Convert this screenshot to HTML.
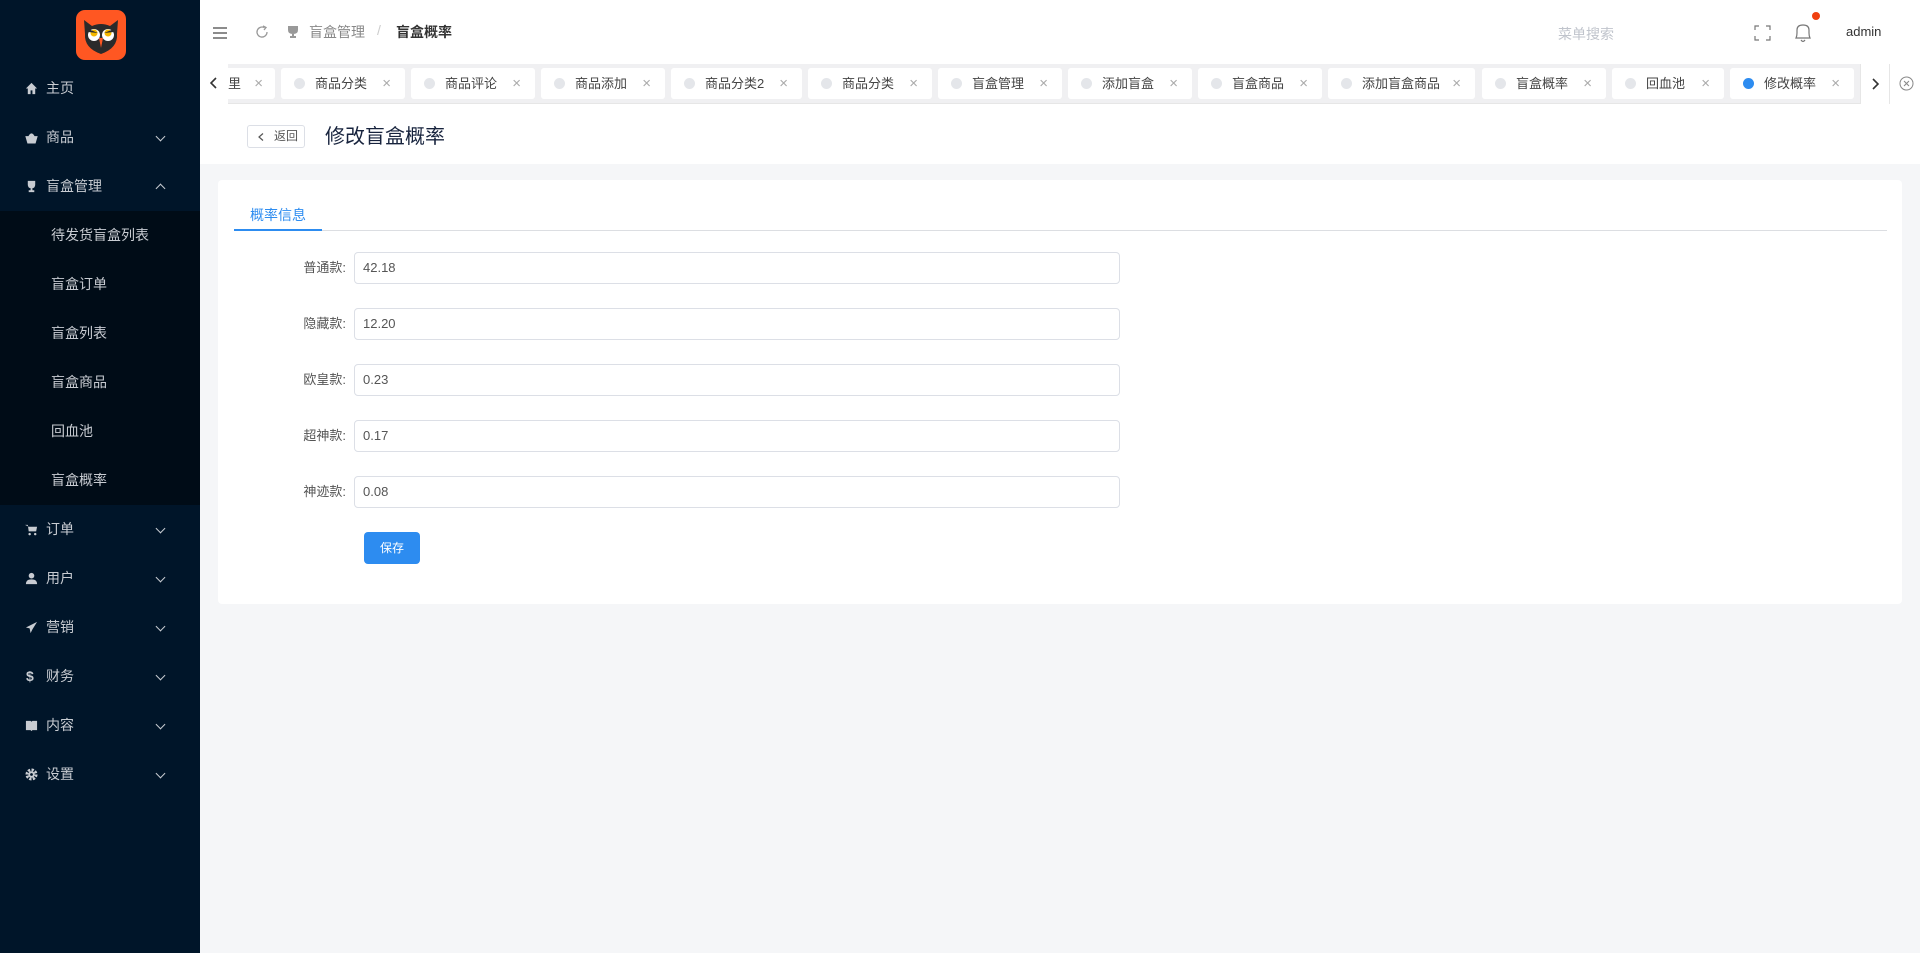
<!DOCTYPE html>
<html><head><meta charset="utf-8"><style>
*{box-sizing:border-box;margin:0;padding:0}
body{width:1920px;height:953px;overflow:hidden;background:#f5f6f8;font-family:"Liberation Sans","Noto Sans CJK SC",sans-serif;position:relative;font-size:14px;color:#333}
.side{position:absolute;left:0;top:0;width:200px;height:953px;background:#001529}
.logo{position:absolute;left:76px;top:10px;width:50px;height:50px;background:#ff5722;border-radius:9px;overflow:hidden}
.mi{position:absolute;left:0;width:200px;height:49px;color:#c8ccd2;font-size:14px;line-height:49px}
.mi .ic{position:absolute;left:25px;top:18px;width:13px;height:13px}
.mi .t{position:absolute;left:46px}
.mi .ar{position:absolute;left:157px;top:20px;width:7px;height:7px;border-right:1.5px solid #c8ccd2;border-bottom:1.5px solid #c8ccd2;transform:rotate(45deg)}
.mi .ar.up{top:23px;transform:rotate(-135deg)}
.sub{position:absolute;left:0;top:211px;width:200px;height:294px;background:#000c17}
.sub div{height:49px;line-height:49px;padding-left:51px;color:#c8ccd2;font-size:14px}
.hdr{position:absolute;left:200px;top:0;width:1720px;height:64px;background:#fff}
.tabs{position:absolute;left:200px;top:64px;width:1720px;height:40px;background:#f0f0f2;border-bottom:1px solid #e6e6e6}
.tab{position:absolute;top:4px;height:31px;background:#fff;border-radius:3px;font-size:13px;color:#444;line-height:31px}
.tab .d{position:absolute;left:13px;top:10px;width:11px;height:11px;border-radius:50%;background:#e4e6ea}
.tab .t{position:absolute;left:34px}
.tab .x{position:absolute;right:14px;color:#aaa;font-size:15px}
.ph{position:absolute;left:200px;top:104px;width:1720px;height:60px;background:#fff}
.card{position:absolute;left:218px;top:180px;width:1684px;height:424px;background:#fff;border-radius:4px}
.lbl{position:absolute;left:256px;width:90px;text-align:right;font-size:13px;color:#555;line-height:32px}
.inp{position:absolute;left:354px;width:766px;height:32px;border:1px solid #dcdfe6;border-radius:4px;font-size:13px;color:#555;line-height:30px;padding-left:8px}
</style></head><body>
<div class="side">
 <div class="logo"><svg width="50" height="50" viewBox="0 0 50 50"><path d="M8 10 L16 16 Q25 12 34 16 L42 10 L41 24 Q42 38 25 44 Q8 38 9 24Z" fill="#2b2b2b"/><circle cx="18" cy="25" r="6" fill="#fff"/><circle cx="32" cy="25" r="6" fill="#fff"/><circle cx="18" cy="23" r="3.5" fill="#f5b800"/><circle cx="32" cy="23" r="3.5" fill="#f5b800"/><path d="M12 19 L22 23 L12 22Z M38 19 L28 23 L38 22Z" fill="#2b2b2b"/><path d="M23 28 L27 28 L25 38Z" fill="#ff5722"/></svg></div>
 <div class="mi" style="top:64px"><svg class="ic" viewBox="0 0 14 14"><path d="M7 1 L1 7 H3 V13 H6 V9 H8 V13 H11 V7 H13Z" fill="#c8ccd2"/></svg><span class="t">主页</span></div>
 <div class="mi" style="top:113px"><svg class="ic" viewBox="0 0 14 14"><path d="M1 6 H13 L11 13 H3Z M4 6 Q7 0 10 6" fill="#c8ccd2" stroke="#c8ccd2"/></svg><span class="t">商品</span><i class="ar"></i></div>
 <div class="mi" style="top:162px"><svg class="ic" viewBox="0 0 14 14"><path d="M3 1 H11 V5 Q11 9 7 9 Q3 9 3 5Z M6 9 H8 V11 H10 V13 H4 V11 H6Z" fill="#c8ccd2"/></svg><span class="t">盲盒管理</span><i class="ar up"></i></div>
 <div class="sub"><div>待发货盲盒列表</div><div>盲盒订单</div><div>盲盒列表</div><div>盲盒商品</div><div>回血池</div><div>盲盒概率</div></div>
 <div class="mi" style="top:505px"><svg class="ic" viewBox="0 0 14 14"><path d="M0 2 H3 L4 9 H12 L13 4 H4" fill="#c8ccd2"/><circle cx="5" cy="12" r="1.3" fill="#c8ccd2"/><circle cx="11" cy="12" r="1.3" fill="#c8ccd2"/></svg><span class="t">订单</span><i class="ar"></i></div>
 <div class="mi" style="top:554px"><svg class="ic" viewBox="0 0 14 14"><circle cx="7" cy="4" r="3" fill="#c8ccd2"/><path d="M1 13 Q1 8 7 8 Q13 8 13 13Z" fill="#c8ccd2"/></svg><span class="t">用户</span><i class="ar"></i></div>
 <div class="mi" style="top:603px"><svg class="ic" viewBox="0 0 14 14"><path d="M13 1 L1 7 L5 8 L6 13 L8 9Z" fill="#c8ccd2"/></svg><span class="t">营销</span><i class="ar"></i></div>
 <div class="mi" style="top:652px"><span style="position:absolute;left:26px;font-weight:bold;font-size:14px">$</span><span class="t">财务</span><i class="ar"></i></div>
 <div class="mi" style="top:701px"><svg class="ic" viewBox="0 0 14 14"><path d="M1 2 H6 L7 3 L8 2 H13 V12 H8 L7 13 L6 12 H1Z" fill="#c8ccd2"/></svg><span class="t">内容</span><i class="ar"></i></div>
 <div class="mi" style="top:750px"><svg class="ic" viewBox="0 0 14 14"><circle cx="7" cy="7" r="5" fill="none" stroke="#c8ccd2" stroke-width="3" stroke-dasharray="2.5 1.4"/><circle cx="7" cy="7" r="3.5" fill="#c8ccd2"/><circle cx="7" cy="7" r="1.5" fill="#001529"/></svg><span class="t">设置</span><i class="ar"></i></div>
</div>
<div class="hdr">
 <svg style="position:absolute;left:13px;top:27px" width="14" height="12"><path d="M0 1H14M0 6H14M0 11H14" stroke="#666" stroke-width="1.6"/></svg>
 <svg style="position:absolute;left:55px;top:25px" width="14" height="14" viewBox="0 0 14 14"><path d="M12 7 A5 5 0 1 1 9.5 2.7" fill="none" stroke="#999" stroke-width="1.3"/><path d="M8 1 L11 2.5 L9 5" fill="none" stroke="#999" stroke-width="1.3"/></svg>
 <svg style="position:absolute;left:87px;top:26px" width="12" height="13" viewBox="0 0 12 13"><path d="M1 0 H11 V4 Q11 8 6 8 Q1 8 1 4Z M5 8 H7 V10 H9 V12 H3 V10 H5Z" fill="#999"/></svg>
 <span style="position:absolute;left:109px;top:22px;color:#888;font-size:14px">盲盒管理</span>
 <span style="position:absolute;left:177px;top:22px;color:#ccc;font-size:14px">/</span>
 <span style="position:absolute;left:196px;top:22px;color:#333;font-size:14px;font-weight:bold">盲盒概率</span>
 <span style="position:absolute;left:1358px;top:24px;color:#c0c4cc;font-size:14px">菜单搜索</span>
 <svg style="position:absolute;left:1554px;top:25px" width="17" height="16"><path d="M1 5V1H5M12 1H16V5M16 11V15H12M5 15H1V11" fill="none" stroke="#777" stroke-width="1.2"/></svg>
 <svg style="position:absolute;left:1594px;top:22px" width="18" height="22" viewBox="0 0 18 22"><path d="M2 16 Q3 14 3 11 V8 Q3 3 9 3 Q15 3 15 8 V11 Q15 14 16 16Z M7 18 Q9 21 11 18" fill="none" stroke="#777" stroke-width="1.2"/></svg>
 <span style="position:absolute;left:1612px;top:12px;width:8px;height:8px;border-radius:50%;background:#f0400f"></span>
 <span style="position:absolute;left:1646px;top:24px;color:#333;font-size:13px">admin</span>
</div>
<div class="tabs">
 <div style="position:absolute;left:0;top:0;width:28px;height:40px;background:#fff"><svg style="position:absolute;left:10px;top:13px" width="8" height="12"><path d="M6 1 L1 6 L6 11" fill="none" stroke="#333" stroke-width="1.6"/></svg></div>
 <div class="tab" style="left:28px;width:47px;border-radius:0 3px 3px 0"><span style="position:absolute;left:0">里</span><span class="x" style="right:12px">×</span></div>
 <div class="tab" style="left:81px;width:124px"><i class="d"></i><span class="t">商品分类</span><span class="x">×</span></div>
 <div class="tab" style="left:211px;width:124px"><i class="d"></i><span class="t">商品评论</span><span class="x">×</span></div>
 <div class="tab" style="left:341px;width:124px"><i class="d"></i><span class="t">商品添加</span><span class="x">×</span></div>
 <div class="tab" style="left:471px;width:131px"><i class="d"></i><span class="t">商品分类2</span><span class="x">×</span></div>
 <div class="tab" style="left:608px;width:124px"><i class="d"></i><span class="t">商品分类</span><span class="x">×</span></div>
 <div class="tab" style="left:738px;width:124px"><i class="d"></i><span class="t">盲盒管理</span><span class="x">×</span></div>
 <div class="tab" style="left:868px;width:124px"><i class="d"></i><span class="t">添加盲盒</span><span class="x">×</span></div>
 <div class="tab" style="left:998px;width:124px"><i class="d"></i><span class="t">盲盒商品</span><span class="x">×</span></div>
 <div class="tab" style="left:1128px;width:147px"><i class="d"></i><span class="t">添加盲盒商品</span><span class="x">×</span></div>
 <div class="tab" style="left:1282px;width:124px"><i class="d"></i><span class="t">盲盒概率</span><span class="x">×</span></div>
 <div class="tab" style="left:1412px;width:112px"><i class="d"></i><span class="t">回血池</span><span class="x">×</span></div>
 <div class="tab" style="left:1530px;width:124px"><i class="d" style="background:#2d8cf0"></i><span class="t">修改概率</span><span class="x">×</span></div>
 <div style="position:absolute;left:1660px;top:0;width:60px;height:40px;background:#fff;border-left:1px solid #e6e6e6"><svg style="position:absolute;left:11px;top:14px" width="8" height="12"><path d="M1 1 L6 6 L1 11" fill="none" stroke="#333" stroke-width="1.6"/></svg><div style="position:absolute;left:28px;top:0;width:1px;height:40px;background:#e6e6e6"></div><svg style="position:absolute;left:38px;top:12px" width="15" height="15"><circle cx="7.5" cy="7.5" r="6.5" fill="none" stroke="#888"/><path d="M5 5L10 10M10 5L5 10" stroke="#888"/></svg></div>
</div>
<div class="ph">
 <div style="position:absolute;left:47px;top:21px;width:58px;height:23px;border:1px solid #dcdfe6;border-radius:3px;font-size:12px;color:#555;line-height:21px"><svg style="position:absolute;left:10px;top:7px" width="6" height="8"><path d="M5 0.5 L1 4 L5 7.5" fill="none" stroke="#555" stroke-width="1.2"/></svg><span style="position:absolute;left:26px">返回</span></div>
 <span style="position:absolute;left:125px;top:16px;font-size:20px;color:#17233d">修改盲盒概率</span>
</div>
<div class="card"></div>
<span style="position:absolute;left:250px;top:205px;font-size:14px;color:#2d8cf0">概率信息</span>
<div style="position:absolute;left:234px;top:230px;width:1653px;height:1px;background:#dcdee2"></div>
<div style="position:absolute;left:234px;top:229px;width:88px;height:2px;background:#2d8cf0"></div>
<div class="lbl" style="top:252px">普通款:</div><div class="inp" style="top:252px">42.18</div>
<div class="lbl" style="top:308px">隐藏款:</div><div class="inp" style="top:308px">12.20</div>
<div class="lbl" style="top:364px">欧皇款:</div><div class="inp" style="top:364px">0.23</div>
<div class="lbl" style="top:420px">超神款:</div><div class="inp" style="top:420px">0.17</div>
<div class="lbl" style="top:476px">神迹款:</div><div class="inp" style="top:476px">0.08</div>
<div style="position:absolute;left:364px;top:532px;width:56px;height:32px;background:#2d8cf0;border-radius:4px;color:#fff;font-size:12px;text-align:center;line-height:32px">保存</div>
</body></html>
